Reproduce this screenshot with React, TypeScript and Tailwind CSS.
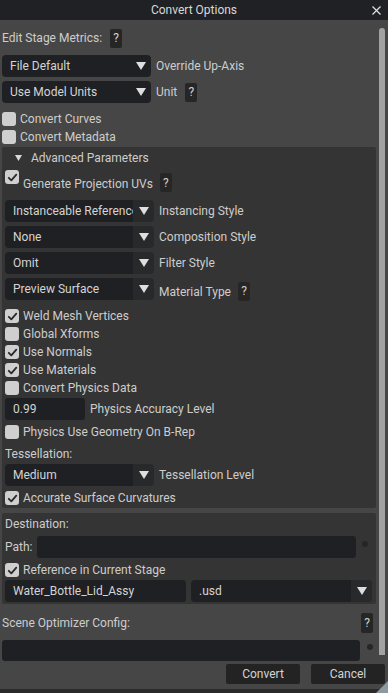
import React from "react";

const font = { fontFamily: "Roboto, 'Noto Sans', sans-serif" };

function Check({ checked }: { checked?: boolean }) {
  return (
    <div className="w-[14px] h-[14px] rounded-[3px] bg-[#cfcfcf] flex items-center justify-center shrink-0">
      {checked && (
        <svg width="11" height="11" viewBox="0 0 11 11">
          <path d="M1.8 5.8 L4.3 8.3 L9.3 2.6" stroke="#2a2a2a" strokeWidth="1.8" fill="none" strokeLinecap="round" strokeLinejoin="round" />
        </svg>
      )}
    </div>
  );
}

function CheckRow({ label, checked, className = "" }: { label: string; checked?: boolean; className?: string }) {
  return (
    <div className={`flex items-center h-[18px] gap-[4px] ${className}`}>
      <Check checked={checked} />
      <span className="text-[12px] text-[#cdcdcd] whitespace-nowrap">{label}</span>
    </div>
  );
}

function Help({ className = "" }: { className?: string }) {
  return (
    <div className={`w-[12px] h-[19px] rounded-[2px] bg-[#262626] flex items-center justify-center text-[12px] text-[#d0d0d0] shrink-0 ${className}`}>
      ?
    </div>
  );
}

function Arrow() {
  return (
    <svg width="10" height="8" viewBox="0 0 10 8">
      <path d="M0 0 L10 0 L5 8 Z" fill="#dedede" />
    </svg>
  );
}

function Combo({ value, className = "", dark }: { value: string; className?: string; dark?: boolean }) {
  return (
    <div className={`flex h-[22px] w-[149px] rounded-[4px] overflow-hidden shrink-0 ${className}`}>
      <div className="flex-1 bg-[#1f2023] flex items-center pl-[8px] overflow-hidden">
        <span className="text-[12px] text-[#d4d4d4] whitespace-nowrap">{value}</span>
      </div>
      <div className={`w-[21px] ${dark ? "bg-[#1f2023]" : "bg-[#28292b]"} flex items-center justify-center`}>
        <Arrow />
      </div>
    </div>
  );
}

function Label({ children, className = "" }: { children: React.ReactNode; className?: string }) {
  return <span className={`text-[12px] text-[#cdcdcd] whitespace-nowrap ${className}`}>{children}</span>;
}

export default function App() {
  return (
    <div className="w-[388px] h-[693px] bg-[#464646] flex flex-col overflow-hidden relative" style={font}>
      {/* Title bar */}
      <div className="h-[20px] bg-[#1f2124] flex items-center justify-center relative shrink-0">
        <span className="text-[12px] text-[#d8d8d8]">Convert Options</span>
        <svg className="absolute right-[7px] top-[6px]" width="9" height="9" viewBox="0 0 9 9">
          <path d="M0.5 0.5 L8.5 8.5 M8.5 0.5 L0.5 8.5" stroke="#e0e0e0" strokeWidth="1.2" />
        </svg>
      </div>

      <div className="flex shrink-0">
        {/* Main column */}
        <div className="w-[376px] pl-[2px] flex flex-col">
          <div className="flex items-center h-[18px] mt-[9px] gap-[8px]">
            <Label>Edit Stage Metrics:</Label>
            <Help />
          </div>
          <div className="flex items-center mt-[8px] gap-[5px]">
            <Combo value="File Default" dark />
            <Label>Override Up-Axis</Label>
          </div>
          <div className="flex items-center mt-[4px] gap-[5px]">
            <Combo value="Use Model Units" dark />
            <Label>Unit</Label>
            <Help className="ml-[3px]" />
          </div>
          <CheckRow label="Convert Curves" className="mt-[7px]" />
          <CheckRow label="Convert Metadata" />

          {/* Advanced panel */}
          <div className="mt-[1px] bg-[#343434] rounded-[2px] flex flex-col pl-[3px] pb-[1px]">
            <div className="flex items-center h-[20px] mt-[1px]">
              <svg className="ml-[10px]" width="7" height="6" viewBox="0 0 7 6">
                <path d="M0 0 L7 0 L3.5 6 Z" fill="#d8d8d8" />
              </svg>
              <Label className="ml-[9px]">Advanced Parameters</Label>
            </div>
            <div className="flex h-[24px] mt-[2px]">
              <Check checked />
              <Label className="ml-[4px] mt-[5px]">Generate Projection UVs</Label>
              <Help className="ml-[7px] mt-[3px]" />
            </div>
            <div className="flex items-center mt-[6px] gap-[5px]">
              <Combo value="Instanceable Reference" />
              <Label>Instancing Style</Label>
            </div>
            <div className="flex items-center mt-[4px] gap-[5px]">
              <Combo value="None" />
              <Label>Composition Style</Label>
            </div>
            <div className="flex items-center mt-[4px] gap-[5px]">
              <Combo value="Omit" />
              <Label>Filter Style</Label>
            </div>
            <div className="flex items-center h-[22px] mt-[4px] gap-[5px]">
              <Combo value="Preview Surface" />
              <Label className="translate-y-[3px]">Material Type</Label>
              <Help className="ml-[2px] translate-y-[2px]" />
            </div>
            <CheckRow label="Weld Mesh Vertices" checked className="mt-[7px]" />
            <CheckRow label="Global Xforms" />
            <CheckRow label="Use Normals" checked />
            <CheckRow label="Use Materials" checked />
            <CheckRow label="Convert Physics Data" />
            <div className="flex items-center mt-[1px] gap-[5px]">
              <div className="w-[80px] h-[22px] bg-[#1f2023] rounded-[3px] flex items-center pl-[8px]">
                <span className="text-[12px] text-[#d4d4d4]">0.99</span>
              </div>
              <Label>Physics Accuracy Level</Label>
            </div>
            <CheckRow label="Physics Use Geometry On B-Rep" className="mt-[3px]" />
            <div className="flex items-center h-[18px] mt-[4px]">
              <Label>Tessellation:</Label>
            </div>
            <div className="flex items-center mt-[1px] gap-[5px]">
              <Combo value="Medium" />
              <Label>Tessellation Level</Label>
            </div>
            <CheckRow label="Accurate Surface Curvatures" checked className="mt-[3px]" />
          </div>

          {/* Destination panel */}
          <div className="mt-[5px] bg-[#343434] rounded-[2px] flex flex-col pl-[3px] pr-[4px] pb-[2px]">
            <div className="flex items-center h-[18px] mt-[2px]">
              <Label>Destination:</Label>
            </div>
            <div className="flex items-center mt-[3px]">
              <Label>Path:</Label>
              <div className="ml-[5px] w-[319px] h-[22px] bg-[#1f2023] rounded-[3px]" />
              <div className="ml-[6px] w-[6px] h-[6px] rounded-full bg-[#262626] self-start mt-[5px]" />
            </div>
            <CheckRow label="Reference in Current Stage" checked className="mt-[3px]" />
            <div className="flex items-center mt-[1px] gap-[5px]">
              <div className="w-[181px] h-[22px] bg-[#1f2023] rounded-[3px] flex items-center pl-[8px]">
                <span className="text-[12px] text-[#d4d4d4]">Water_Bottle_Lid_Assy</span>
              </div>
              <div className="flex h-[22px] w-[181px] rounded-[4px] overflow-hidden">
                <div className="flex-1 bg-[#1f2023] flex items-center pl-[8px]">
                  <span className="text-[12px] text-[#d4d4d4]">.usd</span>
                </div>
                <div className="w-[21px] bg-[#28292b] flex items-center justify-center">
                  <Arrow />
                </div>
              </div>
            </div>
          </div>

          <div className="flex items-center justify-between mt-[9px] h-[20px] pr-[3px]">
            <Label>Scene Optimizer Config:</Label>
            <Help className="h-[20px]" />
          </div>
          <div className="flex mt-[7px]">
            <div className="w-[358px] h-[21px] bg-[#1f2023] rounded-[3px]" />
            <div className="ml-[7px] mt-[4px] w-[6px] h-[6px] rounded-full bg-[#262626]" />
          </div>
        </div>
        {/* Scrollbar */}
        <div className="ml-[3px] mt-[8px] w-[6px] h-[627px] rounded-t-[3px] bg-[#a2a2a2]" />
      </div>

      {/* Buttons */}
      <div className="flex justify-end mt-[3px] pr-[3px] gap-[11px] shrink-0">
        <div className="w-[74px] h-[20px] bg-[#232323] rounded-[2px] flex items-center justify-center">
          <span className="text-[12px] text-[#d4d4d4]">Convert</span>
        </div>
        <div className="w-[74px] h-[20px] bg-[#232323] rounded-[2px] flex items-center justify-center">
          <span className="text-[12px] text-[#d4d4d4]">Cancel</span>
        </div>
      </div>
      <div className="flex-1" />
      <div className="h-[4px] bg-[#2a2a2a] shrink-0" />
      <svg className="absolute right-0 bottom-0" width="12" height="12" viewBox="0 0 12 12">
        <path d="M12 0 L12 12 L0 12 Z" fill="#8a9aa0" />
      </svg>
    </div>
  );
}
